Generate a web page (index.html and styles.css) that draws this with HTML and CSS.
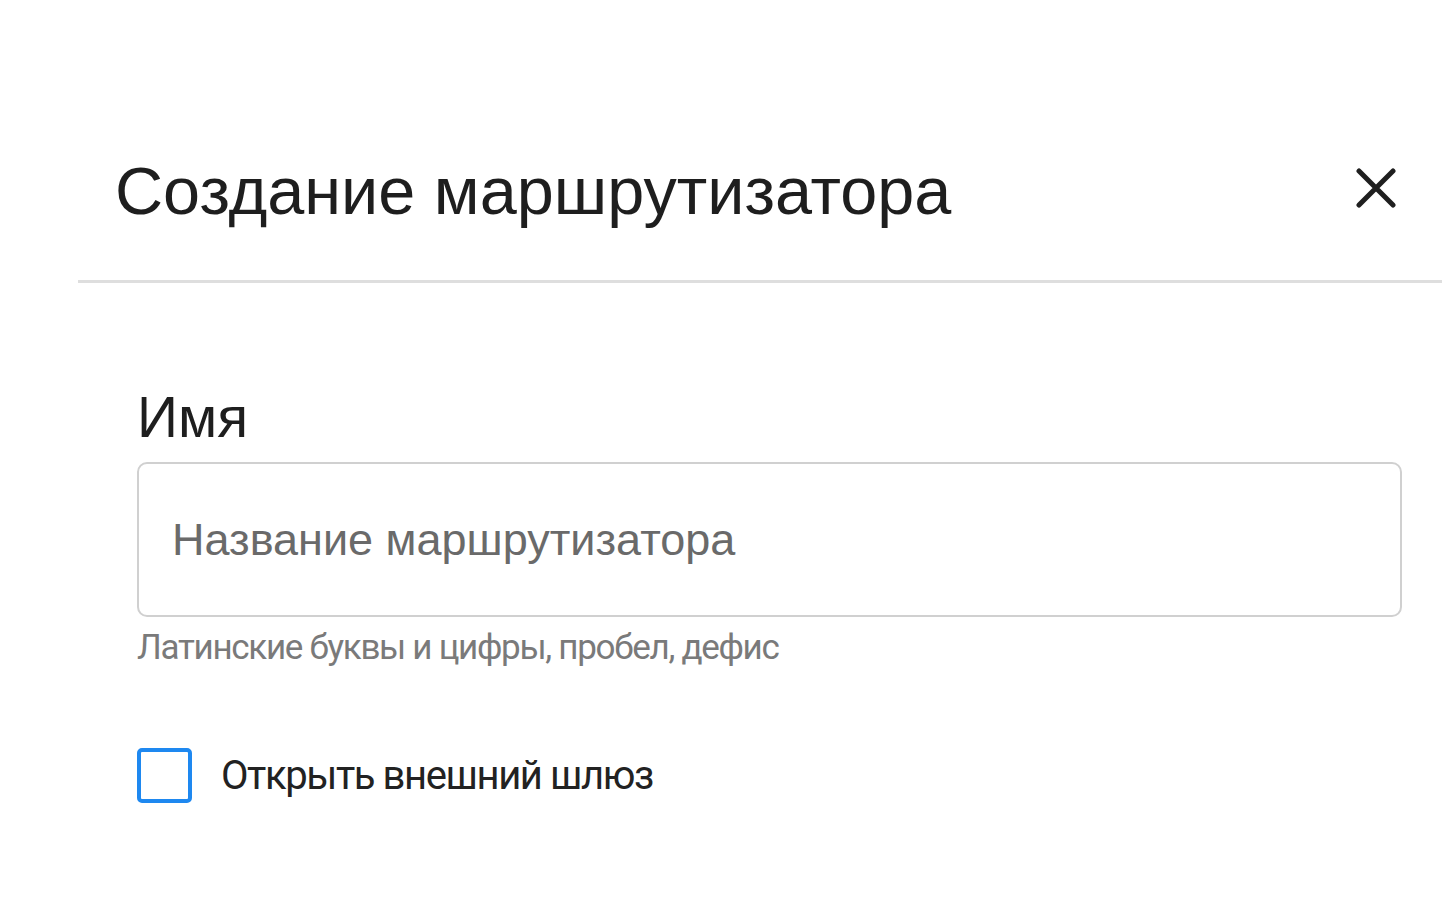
FILE: index.html
```html
<!DOCTYPE html>
<html lang="ru">
<head>
    <meta charset="UTF-8">
    <meta name="viewport" content="width=device-width, initial-scale=1.0">
    <title>Создание маршрутизатора</title>
    <link rel="stylesheet" href="styles.css">
</head>
<body>
    <div class="dialog">
        <div class="dialog-header">
            <h1 class="dialog-title">Создание маршрутизатора</h1>
            <button class="close-btn" type="button" aria-label="Закрыть">
                <svg width="40" height="40" viewBox="0 0 40 40">
                    <path d="M3 3 L37 37 M37 3 L3 37" stroke="#1f1f1f" stroke-width="5" stroke-linecap="round"/>
                </svg>
            </button>
        </div>
        <form class="dialog-body">
            <label class="field-label" for="name">Имя</label>
            <input class="field-input" type="text" id="name" name="name" placeholder="Название маршрутизатора">
            <div class="field-hint">Латинские буквы и цифры, пробел, дефис</div>

            <label class="check">
                <input type="checkbox" name="gateway">
                <span class="check-box"></span>
                <span class="check-text">Открыть внешний шлюз</span>
            </label>
        </form>
    </div>
</body>
</html>
```

FILE: styles.css
```css
body {
    margin: 0;
    background: #ffffff;
    font-family: "Liberation Sans", Arial, sans-serif;
    color: #222;
}

.dialog {
    margin-left: 78px;
    margin-right: 10px;
}

.dialog-header {
    display: flex;
    justify-content: space-between;
    align-items: flex-start;
    padding: 158px 46px 0 37px;
    height: 122px;
    border-bottom: 3px solid #dedede;
}

.dialog-title {
    margin: 0;
    font-size: 66.6px;
    font-weight: normal;
    line-height: 1;
    color: #1e1e1e;
}

.close-btn {
    border: none;
    background: none;
    padding: 0;
    margin-top: 10px;
    cursor: pointer;
}

.close-btn svg {
    display: block;
}

.dialog-body {
    padding: 106px 40px 0 59px;
}

.field-label {
    display: block;
    font-size: 57px;
    line-height: 1;
    color: #1e1e1e;
    margin-bottom: 16px;
}

.field-input {
    display: block;
    box-sizing: border-box;
    width: 100%;
    height: 155px;
    padding: 0 33px;
    border: 2px solid #d0d0d0;
    border-radius: 10px;
    font-family: "Liberation Sans", Arial, sans-serif;
    font-size: 45px;
    color: #222;
    outline: none;
}

.field-input::placeholder {
    color: #6a6a6a;
}

.field-hint {
    margin-top: 10px;
    font-family: Roboto, sans-serif;
    font-size: 35px;
    letter-spacing: -1.3px;
    color: #7a7a7a;
}

.check {
    display: flex;
    align-items: center;
    margin-top: 80px;
    cursor: pointer;
}

.check input {
    display: none;
}

.check-box {
    box-sizing: border-box;
    width: 55px;
    height: 55px;
    border: 4px solid #1e88f0;
    border-radius: 5px;
    margin-right: 29px;
}

.check-text {
    font-family: Roboto, sans-serif;
    font-size: 40px;
    letter-spacing: -1.4px;
    color: #222;
}
```
